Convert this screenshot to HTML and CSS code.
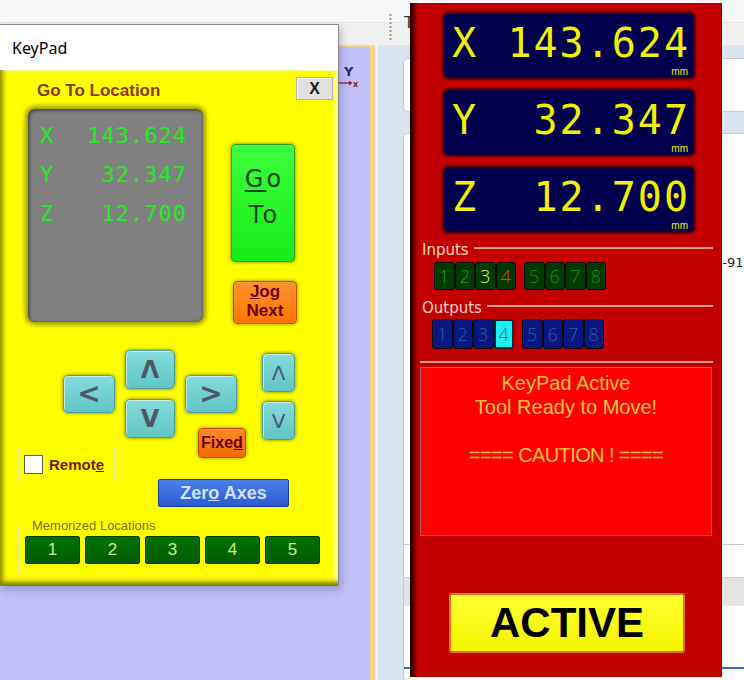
FILE: index.html
```html
<!DOCTYPE html>
<html lang="en">
<head>
<meta charset="utf-8">
<title>KeyPad</title>
<link rel="stylesheet" href="styles.css">
</head>
<body>
<div class="desktop">
  <header class="toolbar">
    <span class="grip"></span>
    <span class="tab-t">T</span>
  </header>

  <div class="canvas">
    <svg class="axis" width="24" height="28" viewBox="0 0 24 28">
      <text x="5" y="12" class="axis-y">Y</text>
      <path d="M0 19 H12" stroke="#8a1c1c" stroke-width="1.3"/>
      <path d="M10 16.8 L13.6 19 L10 21.2 Z" fill="#8a1c1c"/>
      <text x="14" y="23" class="axis-x">x</text>
    </svg>
  </div>

  <aside class="side">
    <div class="card card-a"></div>
    <div class="card card-b">
      <div class="code-line">7-91</div>
      <div class="rule"></div>
      <div class="band"></div>
      <div class="blue-rule"></div>
    </div>
  </aside>

  <section class="keypad">
    <div class="kp-title">KeyPad</div>
    <div class="kp-body">
      <div class="kp-head">
        <h1 class="kp-heading">Go To Location</h1>
        <button class="close-btn">X</button>
      </div>
      <div class="kp-main">
        <div class="lcd">
          <div class="lcd-row"><span>X</span><span>143.624</span></div>
          <div class="lcd-row"><span>Y</span><span>32.347</span></div>
          <div class="lcd-row"><span>Z</span><span>12.700</span></div>
        </div>
        <div class="go-col">
          <button class="go-btn"><span><u>G</u>o</span><span>To</span></button>
          <button class="jog-btn"><span><u>J</u>og</span><span>Next</span></button>
        </div>
      </div>
      <div class="pad">
        <button class="arrow big a-left">&lt;</button>
        <button class="arrow big a-up">Λ</button>
        <button class="arrow big a-down">V</button>
        <button class="arrow big a-right">&gt;</button>
        <button class="arrow small z-up">Λ</button>
        <button class="arrow small z-down">V</button>
        <button class="fixed-btn">Fixe<u>d</u></button>
        <label class="remote"><span class="check"></span><span>Remot<u>e</u></span></label>
        <button class="zero-btn">Zer<u>o</u> Axes</button>
      </div>
      <fieldset class="memo">
        <legend>Memorized Locations</legend>
        <div class="memo-row">
          <button class="memo-btn">1</button>
          <button class="memo-btn">2</button>
          <button class="memo-btn">3</button>
          <button class="memo-btn">4</button>
          <button class="memo-btn">5</button>
        </div>
      </fieldset>
    </div>
  </section>

  <section class="dro-panel">
    <div class="dro-stack">
      <div class="dro">
        <div class="dro-line"><span class="dro-axis">X</span><span>143.624</span></div>
        <div class="mm">mm</div>
      </div>
      <div class="dro">
        <div class="dro-line"><span class="dro-axis">Y</span><span>32.347</span></div>
        <div class="mm">mm</div>
      </div>
      <div class="dro">
        <div class="dro-line"><span class="dro-axis">Z</span><span>12.700</span></div>
        <div class="mm">mm</div>
      </div>
    </div>

    <div class="io-label">Inputs</div>
    <div class="leds inputs">
      <div class="led-group">
        <span class="led in-g">1</span>
        <span class="led in-g">2</span>
        <span class="led in-y">3</span>
        <span class="led in-r">4</span>
      </div>
      <div class="led-group">
        <span class="led in-d">5</span>
        <span class="led in-d">6</span>
        <span class="led in-d">7</span>
        <span class="led in-d">8</span>
      </div>
    </div>

    <div class="io-label">Outputs</div>
    <div class="leds outputs">
      <div class="led-group">
        <span class="led out">1</span>
        <span class="led out">2</span>
        <span class="led out">3</span>
        <span class="led out-on">4</span>
      </div>
      <div class="led-group">
        <span class="led out">5</span>
        <span class="led out">6</span>
        <span class="led out">7</span>
        <span class="led out">8</span>
      </div>
    </div>

    <div class="sep"></div>

    <div class="msg">
      <div>KeyPad Active</div>
      <div>Tool Ready to Move!</div>
      <div>&nbsp;</div>
      <div class="caution">==== CAUTION ! ====</div>
    </div>

    <button class="active-btn">ACTIVE</button>
  </section>
</div>
</body>
</html>
```

FILE: styles.css
```css
* { box-sizing: border-box; }

html, body {
  margin: 0;
  padding: 0;
}

body {
  width: 744px;
  height: 680px;
  overflow: hidden;
  background: #f0f0f0;
  font-family: "Liberation Sans", Arial, sans-serif;
}

.desktop {
  position: relative;
  width: 744px;
  height: 680px;
  overflow: hidden;
}

button {
  font-family: "Liberation Sans", Arial, sans-serif;
  padding: 0;
  margin: 0;
  cursor: pointer;
}

/* ---------- background application ---------- */
.toolbar {
  position: absolute;
  left: 0;
  top: 0;
  width: 744px;
  height: 45px;
  background: linear-gradient(#f7f7f7 0 22px, #e4e4e4 22px 23px, #f0f0f0 23px);
}

.grip {
  position: absolute;
  left: 389px;
  top: 13px;
  width: 3px;
  height: 27px;
  background: radial-gradient(circle, #9a9a9a 1px, transparent 1.3px) 0 0 / 3px 4px;
}

.tab-t {
  position: absolute;
  left: 404px;
  top: 14px;
  font: 16px/18px "DejaVu Sans", sans-serif;
  color: #333;
}

.canvas {
  position: absolute;
  left: 0;
  top: 45px;
  width: 375px;
  bottom: 0;
  background: #c0c0f8;
  border-top: 2px solid #f6d68e;
  border-right: 5px solid #f6d68e;
}

.axis {
  position: absolute;
  left: 339px;
  top: 17px;
}

.axis-y {
  font: bold 13px "DejaVu Sans", sans-serif;
  fill: #23306a;
}

.axis-x {
  font: bold 8px "DejaVu Sans", sans-serif;
  fill: #8a1c1c;
}

.side {
  position: absolute;
  left: 378px;
  top: 45px;
  right: 0;
  bottom: 0;
  background: #d9e4f1;
  display: flex;
  flex-direction: column;
  overflow: hidden;
}

.card {
  margin-left: 25px;
  background: #ffffff;
  border: 1px solid #c4ccd6;
  border-right: none;
  border-radius: 5px 0 0 5px;
}

.card-a {
  margin-top: 13px;
  height: 54px;
}

.card-b {
  margin-top: 21px;
  flex: 1;
  display: flex;
  flex-direction: column;
  border-bottom: none;
}

.code-line {
  margin-top: 121px;
  padding-left: 310px;
  font: 13px/15px "DejaVu Sans", sans-serif;
  color: #222;
  white-space: nowrap;
}

.rule {
  margin-top: 274px;
  height: 1px;
  background: #c6c6c6;
}

.band {
  margin-top: 32px;
  height: 29px;
  background: #e3e3e3;
  border-top: 1px solid #d0d0d0;
}

.blue-rule {
  margin-top: 61px;
  height: 2px;
  background: #2e74cf;
}

/* ---------- KeyPad window ---------- */
.keypad {
  position: absolute;
  left: 0;
  top: 24px;
  width: 339px;
  height: 562px;
  background: #ffffff;
  border-top: 1px solid #8a8a8a;
  border-right: 1px solid #8a8a8a;
  box-shadow: 2px 4px 8px rgba(50, 50, 120, 0.3);
  display: flex;
  flex-direction: column;
}

.kp-title {
  height: 45px;
  padding-left: 12px;
  font: 16px/47px "Noto Sans", "DejaVu Sans", sans-serif;
  color: #000;
}

.kp-body {
  flex: 1;
  background: #ffff00;
  padding-top: 7px;
  box-shadow:
    inset 6px 0 5px -3px #8c8c00,
    inset 0 -7px 5px -3px #7a7a00,
    inset -5px 0 4px -2px #ffffc8,
    inset 0 2px 1px -1px #ffffb0;
}

.kp-head {
  display: flex;
  justify-content: space-between;
  align-items: flex-start;
  padding: 0 5px 0 37px;
}

.kp-heading {
  margin: 3px 0 0 0;
  font: bold 17px/22px "Liberation Sans", Arial, sans-serif;
  color: #8b3800;
}

.close-btn {
  width: 37px;
  height: 23px;
  background: #e1e1e1;
  border: 1px solid #b4b4b4;
  box-shadow: inset 1px 1px 0 #f8f8f8;
  font: bold 16px/21px "Liberation Sans", Arial, sans-serif;
  color: #1c1c1c;
}

.kp-main {
  display: flex;
  margin-top: 7px;
  padding-left: 28px;
}

.lcd {
  width: 175px;
  height: 213px;
  padding: 7px 16px 0 12px;
  background: #808080;
  border-radius: 7px;
  box-shadow:
    0 0 4px 3px rgba(105, 105, 0, 0.65),
    inset 2px 2px 3px rgba(50, 50, 50, 0.6),
    inset -1px -1px 2px rgba(90, 90, 90, 0.6);
}

.lcd-row {
  display: flex;
  justify-content: space-between;
  height: 39px;
  font: 22px/39px "DejaVu Sans Mono", monospace;
  letter-spacing: 1px;
  color: #24ea24;
}

.go-col {
  display: flex;
  flex-direction: column;
  margin-left: 28px;
  margin-top: 35px;
}

.go-btn {
  width: 64px;
  height: 118px;
  display: flex;
  flex-direction: column;
  align-items: center;
  justify-content: center;
  padding: 0 0 12px 3px;
  background: linear-gradient(#3cff3c, #18ec18);
  border: 1px solid #2e9e2e;
  border-radius: 4px;
  box-shadow: 0 0 3px 1px rgba(110, 110, 0, 0.55);
  font: 24px/36px "DejaVu Sans", sans-serif;
  letter-spacing: 3px;
  color: #0c420c;
}

.go-btn u {
  text-decoration-thickness: 2px;
  text-underline-offset: 3px;
}

.jog-btn {
  margin: 19px 0 0 2px;
  width: 64px;
  height: 43px;
  display: flex;
  flex-direction: column;
  align-items: center;
  justify-content: center;
  padding-bottom: 3px;
  background: linear-gradient(#ff9330, #ff7400);
  border: 1px solid #c05400;
  border-radius: 4px;
  box-shadow: 0 0 3px 1px rgba(110, 110, 0, 0.5);
  font: bold 17px/19px "Liberation Sans", Arial, sans-serif;
  color: #680000;
}

.pad {
  display: grid;
  grid-template-columns: 45px 52px 10px 50px 10px 52px 25px 33px;
  grid-template-rows: 39px 10px 39px auto;
  margin: 26px 0 0 18px;
}

.arrow {
  background: linear-gradient(#84dada, #62c6c6);
  border: 1px solid #4c9e9e;
  border-radius: 5px;
  box-shadow: 0 0 3px 1px rgba(110, 110, 0, 0.55), inset 1px 1px 0 rgba(255, 255, 255, 0.55);
  color: #4b5966;
  display: flex;
  align-items: center;
  justify-content: center;
}

.big {
  font: bold 24px/1 "DejaVu Sans", sans-serif;
}

.small {
  font: 20px/1 "DejaVu Sans", sans-serif;
}

.a-left  { grid-column: 2; grid-row: 1 / 4; align-self: center; height: 38px; font-size: 28px; }
.a-up    { grid-column: 4; grid-row: 1; }
.a-down  { grid-column: 4; grid-row: 3; }
.a-right { grid-column: 6; grid-row: 1 / 4; align-self: center; height: 38px; font-size: 28px; }
.z-up    { grid-column: 8; grid-row: 1; margin-top: 3px; height: 39px; }
.z-down  { grid-column: 8; grid-row: 3; margin-top: 2px; height: 39px; }

.fixed-btn {
  grid-column: 6 / 8;
  grid-row: 3 / 5;
  align-self: start;
  justify-self: start;
  margin: 29px 0 0 13px;
  width: 48px;
  height: 30px;
  background: linear-gradient(#ff8a24, #f26a00);
  border: 1px solid #b84a00;
  border-radius: 4px;
  box-shadow: 0 0 3px 1px rgba(110, 110, 0, 0.5);
  font: bold 16px/28px "Liberation Sans", Arial, sans-serif;
  color: #680000;
}

.remote {
  grid-column: 1 / 4;
  grid-row: 4;
  align-self: start;
  justify-self: start;
  margin-top: 9px;
  width: 97px;
  height: 35px;
  border: 1px solid #ecec8c;
  display: flex;
  align-items: center;
  gap: 6px;
  padding-left: 5px;
  font: bold 15px/18px "Liberation Sans", Arial, sans-serif;
  color: #7a1600;
}

.check {
  width: 19px;
  height: 19px;
  background: #ffffff;
  border: 1.5px solid #585858;
}

.zero-btn {
  grid-column: 4 / 9;
  grid-row: 4;
  align-self: start;
  justify-self: start;
  margin: 41px 0 0 33px;
  width: 131px;
  height: 28px;
  background: linear-gradient(#4c80ec, #2a5ad2);
  border: 1px solid #1c3c9c;
  border-radius: 2px;
  font: bold 18px/26px "Liberation Sans", Arial, sans-serif;
  color: #cfe2ff;
}

.memo {
  margin: 11px 0 0 18px;
  width: 310px;
  padding: 3px 6px 7px;
  border: 1px solid #ecec8c;
  min-width: 0;
}

.memo legend {
  margin-left: 5px;
  padding: 0 2px;
  font: 13px/15px "Liberation Sans", Arial, sans-serif;
  color: #806c00;
}

.memo-row {
  display: flex;
  gap: 5px;
}

.memo-btn {
  width: 55px;
  height: 28px;
  background: linear-gradient(#007200, #005a00);
  border: 1px solid #0c3a0c;
  border-radius: 2px;
  font: 17px/26px "Liberation Sans", Arial, sans-serif;
  color: #c8f07c;
}

/* ---------- DRO panel ---------- */
.dro-panel {
  position: absolute;
  left: 410px;
  top: 3px;
  width: 312px;
  height: 674px;
  background: #c20000;
  border-right: 1px solid #8c0000;
  box-shadow: inset 7px 0 5px -3px #1a0000;
  display: flex;
  flex-direction: column;
  align-items: flex-start;
  padding-top: 10px;
}

.dro-stack {
  display: flex;
  flex-direction: column;
  gap: 12px;
  margin-left: 34px;
  width: 250px;
}

.dro {
  height: 65px;
  padding: 7px 4px 0 8px;
  background: #00004c;
  border-radius: 5px;
  box-shadow: 0 0 2px 2px #5c0000;
  display: flex;
  flex-direction: column;
  color: #f0f000;
}

.dro-line {
  display: flex;
  justify-content: space-between;
  font: 40px/46px "DejaVu Sans Mono", monospace;
  letter-spacing: 2px;
}

.dro-axis {
  letter-spacing: 0;
}

.mm {
  align-self: flex-end;
  margin-top: auto;
  margin-bottom: 1px;
  padding-right: 2px;
  font: 10px/11px "Liberation Sans", Arial, sans-serif;
}

.io-label {
  align-self: stretch;
  display: flex;
  align-items: center;
  gap: 5px;
  margin: 9px 8px 0 12px;
  font: 15px/18px "DejaVu Sans", sans-serif;
  color: #ffd6c4;
}

.io-label::after {
  content: "";
  flex: 1;
  height: 2px;
  margin-bottom: 4px;
  background: #e49c9c;
}

.leds {
  display: flex;
  gap: 8px;
}

.inputs {
  margin: 3px 0 0 24px;
}

.outputs {
  margin: 2px 0 0 22px;
}

.led-group {
  display: flex;
}

.led {
  width: 20.5px;
  display: flex;
  align-items: center;
  justify-content: center;
  border: 1px solid #0a0a0a;
  border-radius: 3px;
  font: 300 18px/1 "Open Sans", "DejaVu Sans", sans-serif;
}

.inputs .led {
  height: 28px;
  background: #003a00;
}

.in-g { color: #22a022; }
.in-y { color: #f2f040; }
.in-r { color: #e43a22; }
.in-d { color: #1c8a1c; }

.outputs .led {
  height: 30px;
}

.out {
  background: #081880;
  color: #3656a8;
}

.out-on {
  width: 20.5px;
  display: flex;
  align-items: center;
  justify-content: center;
  background: #1cf0f0;
  color: #246a80;
  border: 2px solid #002838;
  border-radius: 3px;
  font: 300 18px/1 "Open Sans", "DejaVu Sans", sans-serif;
}

.sep {
  align-self: stretch;
  height: 2px;
  margin: 12px 8px 0 10px;
  background: #e49c9c;
}

.msg {
  margin: 4px 0 0 10px;
  width: 292px;
  height: 169px;
  padding-top: 3px;
  background: #ff0000;
  border: 1px solid #a86262;
  text-align: center;
  font: 20px/24px "Liberation Sans", Arial, sans-serif;
  color: #ffc43a;
}

.caution {
  letter-spacing: -0.6px;
}

.active-btn {
  margin: 57px 0 0 39px;
  width: 236px;
  height: 60px;
  background: linear-gradient(#ffff30, #f4f400);
  border: 2px solid #e07818;
  border-radius: 3px;
  font: bold 42px/56px "Liberation Sans", Arial, sans-serif;
  color: #000;
}
```
